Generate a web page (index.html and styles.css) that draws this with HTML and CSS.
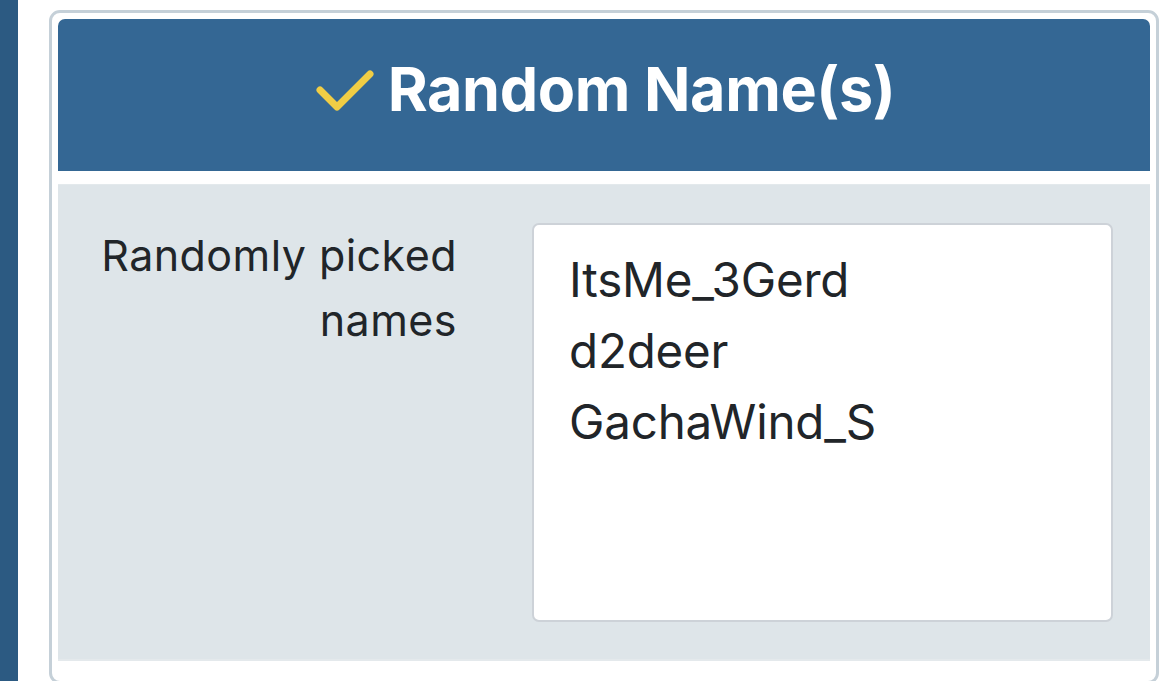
FILE: index.html
```html
<!DOCTYPE html>
<html lang="en">
<head>
<meta charset="utf-8">
<title>Random Name(s)</title>
<link rel="stylesheet" href="styles.css">
</head>
<body>
<div class="page">
  <div class="side-strip"></div>
  <section class="card">
    <header class="card-header">
      <svg class="check" width="62" height="46" viewBox="0 0 62 46" aria-hidden="true">
        <polyline points="7,23 24,40 57,7" fill="none" stroke="#f0cd45" stroke-width="7" stroke-linecap="round" stroke-linejoin="round"/>
      </svg>
      <h1 class="title">Random Name(s)</h1>
    </header>
    <div class="card-body">
      <label class="field-label" for="names">Randomly picked names</label>
      <textarea id="names" class="names" readonly>ItsMe_3Gerd
d2deer
GachaWind_S</textarea>
    </div>
  </section>
</div>
</body>
</html>
```

FILE: styles.css
```css
html, body {
  margin: 0;
  padding: 0;
  background: #ffffff;
  font-family: Inter, "Noto Sans", "Liberation Sans", sans-serif;
  color: #212529;
}

.page {
  display: flex;
  align-items: flex-start;
  height: 681px;
  overflow: hidden;
}

.side-strip {
  width: 18px;
  height: 681px;
  background: #2c5a82;
  flex: none;
}

.card {
  box-sizing: border-box;
  margin: 10px 0 0 31px;
  width: 1110px;
  height: 674px;
  border: 3px solid #c5d0d8;
  border-radius: 11px;
  padding: 6px 6px 16px 6px;
  background: #ffffff;
  display: flex;
  flex-direction: column;
}

.card-header {
  box-sizing: border-box;
  height: 152px;
  background: #346794;
  border-radius: 7px 7px 0 0;
  display: flex;
  align-items: center;
  justify-content: center;
  gap: 13px;
  padding: 0 0 11px 0;
  flex: none;
}

.check {
  display: block;
  flex: none;
}

.title {
  margin: 0;
  font-size: 61px;
  line-height: 1.2;
  font-weight: 700;
  color: #ffffff;
  letter-spacing: -0.4px;
}

.card-body {
  margin-top: 13px;
  background: #dee5e9;
  border-top: 1px solid #e3e9ec;
  border-bottom: 2px solid #e4e9ec;
  padding: 38px 37px 37px 0;
  display: grid;
  grid-template-columns: 399px 581px;
  column-gap: 75px;
  align-items: start;
  flex: none;
}

.field-label {
  text-align: right;
  font-size: 43px;
  line-height: 65px;
  letter-spacing: 0.45px;
  color: #212529;
}

.names {
  box-sizing: border-box;
  display: block;
  width: 581px;
  height: 399px;
  margin: 0;
  border: 2px solid #cdd2d8;
  border-radius: 7px;
  background: #ffffff;
  padding: 19px 33px 19px 35px;
  font-family: Inter, "Noto Sans", "Liberation Sans", sans-serif;
  font-size: 47.5px;
  line-height: 71px;
  letter-spacing: -0.2px;
  color: #212529;
  resize: none;
  overflow: hidden;
  outline: none;
}
```
